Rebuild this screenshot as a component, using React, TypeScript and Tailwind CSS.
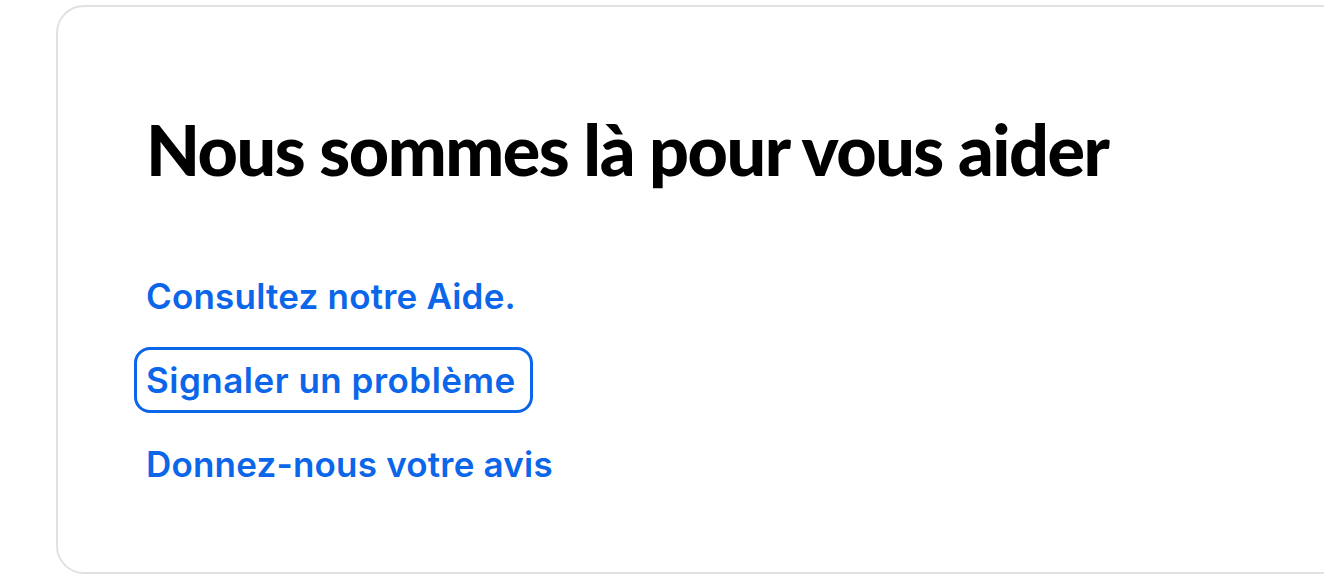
export default function App() {
  return (
    <div className="min-h-[577px] w-full overflow-hidden bg-white pl-14 pt-[5px]">
      <div className="-mr-10 h-[569px] rounded-[28px] border-2 border-[#e1e1e1] pl-[88px] pt-[102px]">
        <h1 className="font-['Lato',sans-serif] text-[70px] font-black leading-[80px] tracking-[-1.5px] text-black">
          Nous sommes là pour vous aider
        </h1>
        <div className="mt-[84px] flex flex-col items-start gap-[38px] font-['Inter',sans-serif] text-[35px] font-semibold leading-[46px] tracking-[0.2px] text-[#0b66e9]">
          <a href="#">Consultez notre Aide.</a>
          <a
            href="#"
            className="-mx-[12px] -my-[10px] rounded-[16px] border-[3px] border-[#0b66e9] pl-[9px] pr-[14px] py-[7px] tracking-[0.5px]"
          >
            Signaler un problème
          </a>
          <a href="#">Donnez-nous votre avis</a>
        </div>
      </div>
    </div>
  )
}
